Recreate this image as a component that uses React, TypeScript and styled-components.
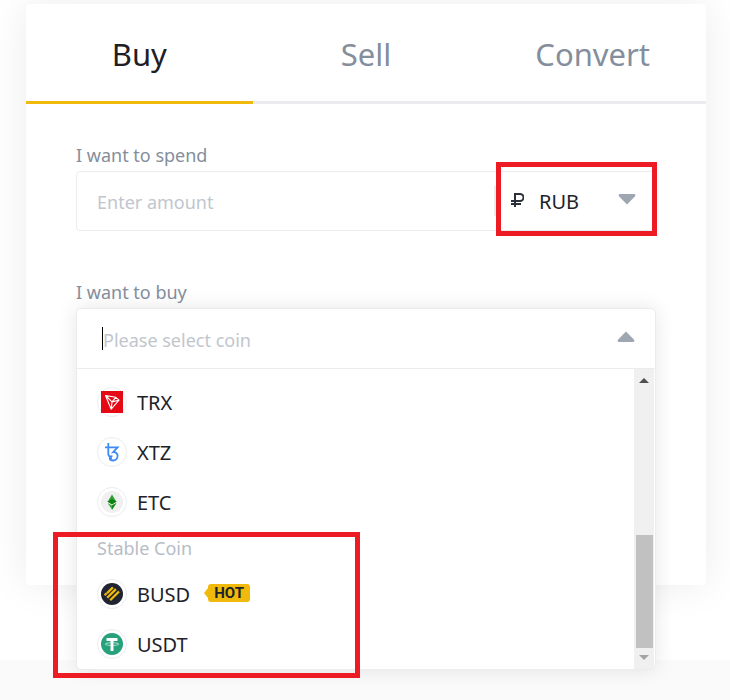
import React from 'react';
import styled, { createGlobalStyle } from 'styled-components';

const GlobalStyle = createGlobalStyle`
  *, *::before, *::after { box-sizing: border-box; }
  body {
    margin: 0;
    background: #fafafa;
    color: #1e2329;
    font-family: "Noto Sans", "Open Sans", sans-serif;
  }
  button, input { font: inherit; color: inherit; }
`;

const Page = styled.main`
  position: relative;
  min-height: 700px;
`;

const Hero = styled.section`
  background: #fff;
  padding: 4px 24px 75px 26px;
`;

const Card = styled.div`
  background: #fff;
  border-radius: 4px;
  min-height: 581px;
  box-shadow: 0 0 40px rgba(20, 21, 26, 0.08);
`;

const Tabs = styled.div`
  display: grid;
  grid-template-columns: repeat(3, 1fr);
`;

const Tab = styled.button<{ $active?: boolean }>`
  height: 100px;
  padding: 2px 0 0;
  background: none;
  border: 0;
  border-bottom: 3px solid ${(p) => (p.$active ? '#f0b90b' : '#eaeaef')};
  color: ${(p) => (p.$active ? '#1e2026' : '#848e9c')};
  font-size: 31px;
  cursor: pointer;
`;

const Form = styled.form`
  padding: 38px 50px 0;
`;

const Field = styled.div`
  position: relative;
  margin-bottom: 48px;
`;

const Label = styled.label`
  display: block;
  height: 29px;
  line-height: 27px;
  font-size: 18px;
  color: #848e9c;
`;

const AmountBox = styled.div`
  display: flex;
  align-items: center;
  height: 60px;
  border: 1px solid #eaecef;
  border-radius: 4px;
`;

const TextInput = styled.input`
  flex: 1;
  min-width: 0;
  height: 100%;
  padding: 2px 0 0 20px;
  border: 0;
  outline: 0;
  background: none;
  font-size: 18px;

  &::placeholder { color: #c1c6cd; opacity: 1; }
`;

const CurrencyButton = styled.button`
  display: flex;
  align-items: center;
  width: 161px;
  height: 30px;
  padding: 0 19px 0 15px;
  background: none;
  border: 0;
  border-left: 2px solid #eaecef;
  font-size: 20px;
  cursor: pointer;

  span { flex: 1; padding-left: 15px; text-align: left; }
  svg { margin-bottom: 3px; }
`;

const Dropdown = styled.div`
  position: absolute;
  top: 29px;
  left: 0;
  right: 0;
  border: 1px solid #eaecef;
  border-radius: 5px;
  background: #fff;
  box-shadow: 0 0 20px rgba(20, 21, 26, 0.1);
  overflow: hidden;
`;

const SearchRow = styled.div`
  display: flex;
  align-items: center;
  height: 60px;
  padding: 0 20px 0 25px;
  border-bottom: 1px solid #eaecef;
`;

const Caret = styled.span`
  width: 1px;
  height: 23px;
  background: #000;
`;

const CoinInput = styled(TextInput)`
  padding: 2px 0 0;
`;

const ToggleButton = styled.button`
  display: flex;
  padding: 0 0 4px;
  background: none;
  border: 0;
  cursor: pointer;
`;

const ListArea = styled.div`
  display: flex;
  height: 300px;
`;

const List = styled.div`
  flex: 1;
  padding-top: 8px;
`;

const GroupLabel = styled.div`
  height: 42px;
  padding-left: 20px;
  line-height: 42px;
  font-size: 18px;
  color: #b7bdc6;
`;

const Option = styled.button`
  display: flex;
  align-items: center;
  width: 100%;
  height: 50px;
  padding: 0 20px;
  background: none;
  border: 0;
  font-size: 20px;
  cursor: pointer;
`;

const CoinName = styled.span`
  padding-left: 10px;
`;

const CoinRing = styled.span`
  display: flex;
  align-items: center;
  justify-content: center;
  width: 30px;
  height: 30px;
  border: 1px solid #eaecef;
  border-radius: 50%;
`;

const HotBadge = styled.span`
  display: flex;
  align-items: center;
  margin-left: 14px;
  padding-bottom: 2px;

  &::before {
    content: "";
    border: 5px solid transparent;
    border-left: 0;
    border-right: 4px solid #f0b90b;
  }

  b {
    height: 18px;
    padding: 0 6px;
    line-height: 19px;
    border-radius: 3px;
    background: #f0b90b;
    font-family: Roboto, sans-serif;
    font-size: 15px;
    font-weight: 700;
  }
`;

const Scrollbar = styled.div`
  display: flex;
  flex-direction: column;
  justify-content: space-between;
  align-items: center;
  width: 20px;
  margin-right: 1px;
  padding: 9px 0;
  background: #f0f0f0;
`;

const Thumb = styled.div`
  width: 17px;
  height: 113px;
  margin: auto 0 7px;
  background: #c1c1c1;
`;

const Highlight = styled.div<{ $x: number; $y: number; $w: number; $h: number }>`
  position: absolute;
  left: ${(p) => p.$x}px;
  top: ${(p) => p.$y}px;
  width: ${(p) => p.$w}px;
  height: ${(p) => p.$h}px;
  border: 5px solid #ed1c24;
  pointer-events: none;
`;

const Arrow = ({ up }: { up?: boolean }) => (
  <svg width="18" height="11" viewBox="0 0 18 11" aria-hidden="true">
    <path
      d={up ? 'M9 0.5 17.3 9Q17.6 10.8 16.3 11H1.7Q.4 10.8.7 9Z' : 'M9 10.5.7 2Q.4.2 1.7 0h14.6q1.3.2 1 2Z'}
      fill="#9ea6b1"
    />
  </svg>
);

const ScrollArrow = ({ down }: { down?: boolean }) => (
  <svg width="10" height="5" viewBox="0 0 10 5" aria-hidden="true">
    <path d={down ? 'M0 0h10L5 5Z' : 'M0 5h10L5 0Z'} fill={down ? '#a3a3a3' : '#505050'} />
  </svg>
);

const RubleIcon = () => (
  <svg width="13" height="14" viewBox="0 0 13 14" fill="none" stroke="#2b303b" strokeWidth="2" aria-hidden="true">
    <path d="M4 14V1h5a2.800 2.800 0 0 1 0 7H0M0 11h10" />
  </svg>
);

const icons: Record<string, React.ReactNode> = {
  TRX: (
    <svg width="22" height="22" viewBox="0 0 22 22" fill="none" aria-hidden="true">
      <path d="M0 0h22v22H0z" fill="#e50915" />
      <path
        d="M4.5 4.5 14.8 6.3 18 9.2 10.2 18.2ZM4.500 4.500l6.500 6.400L14.800 6.300M11 10.900l7-1.700M11 10.900l-.8 7.300"
        stroke="#fff"
        strokeWidth="1.1"
        strokeLinejoin="round"
      />
    </svg>
  ),
  XTZ: (
    <svg width="22" height="22" viewBox="0 0 22 22" fill="none" stroke="#3e8bf5" strokeWidth="1.8" aria-hidden="true">
      <path d="M7.3 2v10.7q0 2.8 2.3 2.8 1.2 0 1.5-1M4 6.4h12.6L12.1 11.2c2.6-.3 4.5 1 4.5 3.6 0 2.7-2 4.700-4.400 4.700-1.900 0-3.300-.8-3.300-2" />
      <circle cx="9.4" cy="17.2" r=".7" fill="#3e8bf5" />
    </svg>
  ),
  ETC: (
    <svg width="22" height="22" viewBox="0 0 22 22" aria-hidden="true">
      <circle cx="11" cy="11" r="11" fill="#f0f0f0" />
      <path d="M11 3.5 15 10.2 11 12.4 7 10.2Z" fill="#2f9e35" />
      <path d="M11 8.2 15.8 10.6 11 13.400 6.200 10.600Z" fill="#0b8311" />
      <path d="M6.6 12 11 14.4 15.4 12 11 18.8Z" fill="#3cae40" />
      <path d="M11 14.400 15.400 12 11 18.800Z" fill="#16851b" />
    </svg>
  ),
  BUSD: (
    <svg width="22" height="22" viewBox="0 0 22 22" aria-hidden="true">
      <circle cx="11" cy="11" r="11" fill="#1f2430" />
      <g stroke="#f0b90b" strokeWidth="2.3">
        <path d="M3.600 12.300 5.600 10.300M6 10.300 11.900 4.400M6.200 14.800 14.900 6.100M9.200 17.300 18 8.500" />
      </g>
    </svg>
  ),
  USDT: (
    <svg width="22" height="22" viewBox="0 0 22 22" fill="none" aria-hidden="true">
      <circle cx="11" cy="11" r="11" fill="#26a17b" />
      <path d="M5.500 5h11v2.900h-4V18h-3V7.900h-4Z" fill="#fff" />
      <path d="M9.6 9.8C6.8 9.9 4.2 10.4 4.2 11.1S7.500 12.500 11 12.500 17.800 11.800 17.800 11.100 15.200 9.900 12.400 9.800" stroke="#fff" strokeOpacity=".75" strokeWidth=".8" />
    </svg>
  ),
};

const Coin = ({ name, hot }: { name: string; hot?: boolean }) => (
  <Option type="button" role="option" aria-selected="false">
    <CoinRing>{icons[name]}</CoinRing>
    <CoinName>{name}</CoinName>
    {hot && (
      <HotBadge>
        <b>HOT</b>
      </HotBadge>
    )}
  </Option>
);

export default function App() {
  return (
    <>
      <GlobalStyle />
      <Page>
        <Hero>
          <Card>
            <Tabs role="tablist">
              <Tab type="button" role="tab" aria-selected="true" $active>
                Buy
              </Tab>
              <Tab type="button" role="tab" aria-selected="false">
                Sell
              </Tab>
              <Tab type="button" role="tab" aria-selected="false">
                Convert
              </Tab>
            </Tabs>
            <Form>
              <Field>
                <Label htmlFor="amount">I want to spend</Label>
                <AmountBox>
                  <TextInput id="amount" placeholder="Enter amount" />
                  <CurrencyButton type="button" aria-haspopup="listbox">
                    <RubleIcon />
                    <span>RUB</span>
                    <Arrow />
                  </CurrencyButton>
                </AmountBox>
              </Field>
              <Field>
                <Label htmlFor="coin">I want to buy</Label>
                <Dropdown>
                  <SearchRow>
                    <Caret />
                    <CoinInput
                      id="coin"
                      role="combobox"
                      aria-expanded="true"
                      aria-controls="coins"
                      placeholder="Please select coin"
                    />
                    <ToggleButton type="button" aria-label="Close coin list">
                      <Arrow up />
                    </ToggleButton>
                  </SearchRow>
                  <ListArea>
                    <List id="coins" role="listbox">
                      <Coin name="TRX" />
                      <Coin name="XTZ" />
                      <Coin name="ETC" />
                      <GroupLabel>Stable Coin</GroupLabel>
                      <Coin name="BUSD" hot />
                      <Coin name="USDT" />
                    </List>
                    <Scrollbar>
                      <ScrollArrow />
                      <Thumb />
                      <ScrollArrow down />
                    </Scrollbar>
                  </ListArea>
                </Dropdown>
              </Field>
            </Form>
          </Card>
        </Hero>
        <Highlight $x={496} $y={162} $w={161} $h={74} />
        <Highlight $x={53} $y={532} $w={307} $h={146} />
      </Page>
    </>
  );
}
